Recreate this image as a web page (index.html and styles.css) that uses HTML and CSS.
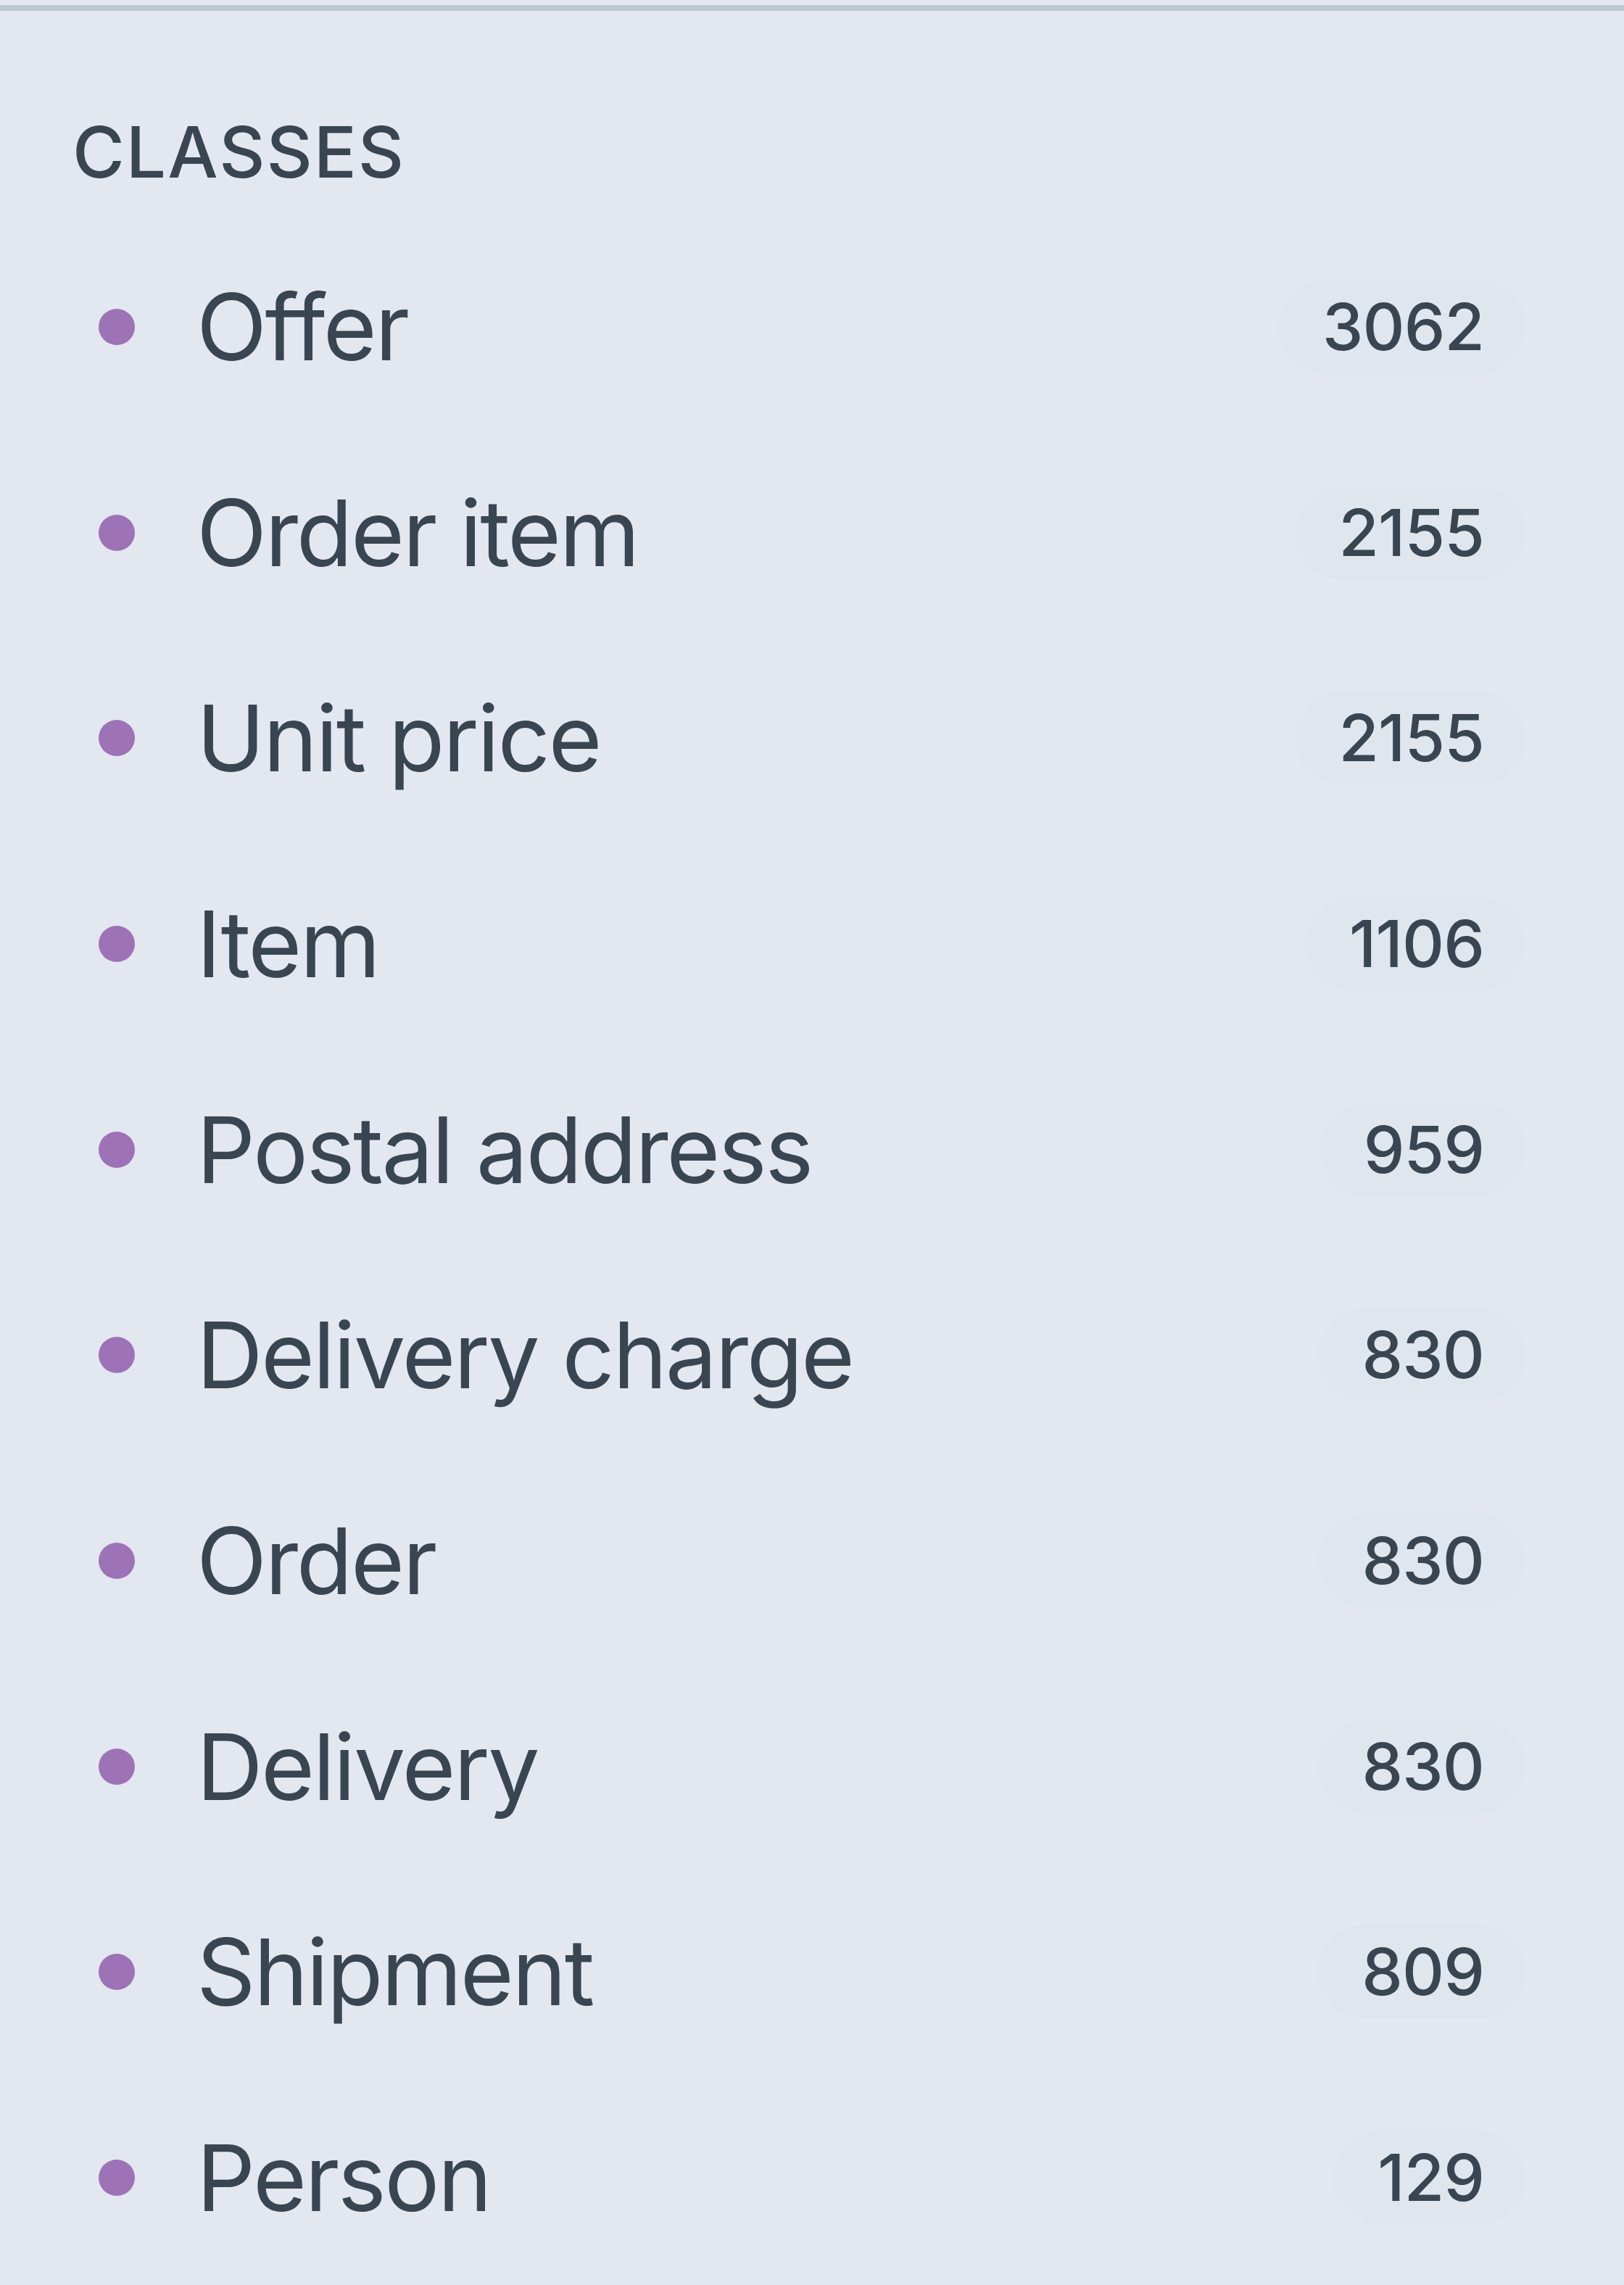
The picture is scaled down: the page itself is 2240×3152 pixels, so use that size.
FILE: index.html
```html
<!DOCTYPE html>
<html lang="en">

<head>
    <meta charset="UTF-8">
    <meta name="viewport" content="width=device-width, initial-scale=1.0">
    <title>Classes</title>
    <link rel="stylesheet" href="styles.css">
</head>

<body>
    <div class="panel">
        <h2 class="panel-title">Classes</h2>
        <ul class="class-list">
            <li class="class-item"><span class="dot"></span><span class="class-name">Offer</span><span class="count">3062</span></li>
            <li class="class-item"><span class="dot"></span><span class="class-name">Order item</span><span class="count">2155</span></li>
            <li class="class-item"><span class="dot"></span><span class="class-name">Unit price</span><span class="count">2155</span></li>
            <li class="class-item"><span class="dot"></span><span class="class-name">Item</span><span class="count">1106</span></li>
            <li class="class-item"><span class="dot"></span><span class="class-name">Postal address</span><span class="count">959</span></li>
            <li class="class-item"><span class="dot"></span><span class="class-name">Delivery charge</span><span class="count">830</span></li>
            <li class="class-item"><span class="dot"></span><span class="class-name">Order</span><span class="count">830</span></li>
            <li class="class-item"><span class="dot"></span><span class="class-name">Delivery</span><span class="count">830</span></li>
            <li class="class-item"><span class="dot"></span><span class="class-name">Shipment</span><span class="count">809</span></li>
            <li class="class-item"><span class="dot"></span><span class="class-name">Person</span><span class="count">129</span></li>
        </ul>
    </div>
</body>

</html>
```

FILE: styles.css
```css
body {
    font-family: 'Inter', 'Noto Sans', sans-serif;
    margin: 0;
    padding: 0;
    background-color: #e3e7f0;
    color: #3a4552;
}

.panel {
    margin-top: 7px;
    border-top: 8px solid #bbc7d3;
    padding: 0 137px 0 100px;
}

.panel-title {
    margin: 0;
    padding-top: 146px;
    font-size: 98px;
    line-height: 1;
    font-weight: 500;
    letter-spacing: 0.02em;
    text-transform: uppercase;
}

.class-list {
    list-style: none;
    margin: 0;
    padding: 0;
    margin-top: 50px;
}

.class-item {
    display: flex;
    align-items: center;
    height: 283.7px;
}

.dot {
    width: 50px;
    height: 50px;
    border-radius: 50%;
    background-color: #9d72b6;
    margin-left: 36px;
    margin-right: 85px;
    flex-shrink: 0;
}

.class-name {
    flex: 1;
    font-size: 127px;
    font-weight: 400;
    letter-spacing: -0.02em;
}

.count {
    font-size: 90px;
    font-weight: 500;
    line-height: 130px;
    letter-spacing: -0.01em;
    padding: 0 56px 0 60px;
    border-radius: 999px;
    background-color: #dfe6ee;
}
```
